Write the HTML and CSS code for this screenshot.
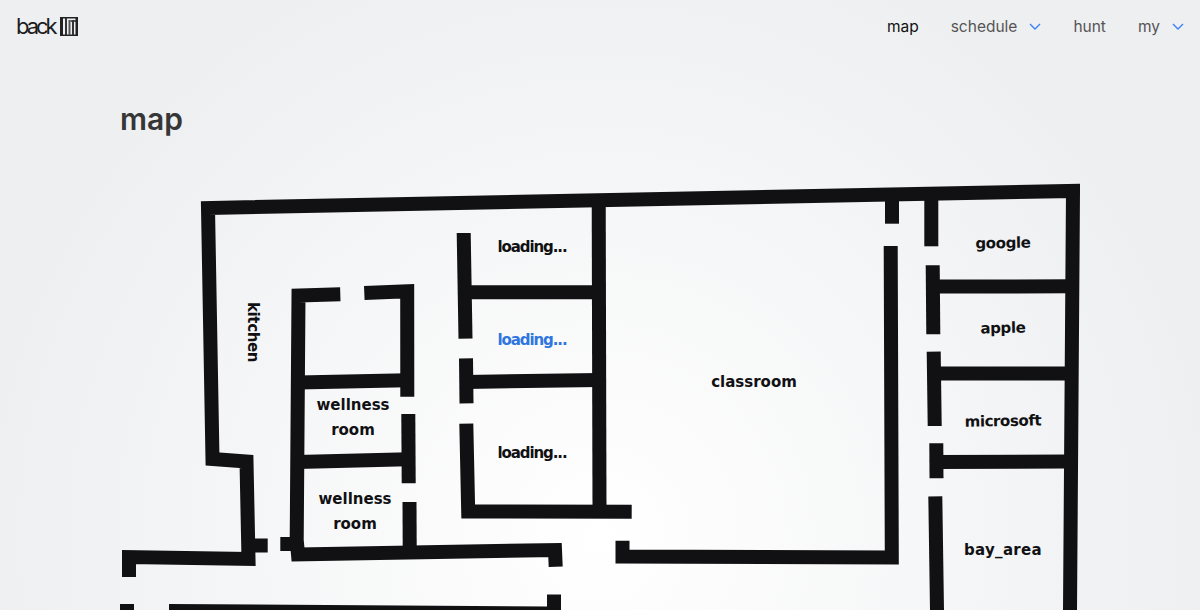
FILE: index.html
```html
<!DOCTYPE html>
<html>
<head>
<meta charset="utf-8">
<title>map</title>
<link rel="stylesheet" href="styles.css">
</head>
<body>

<header class="topbar">
  <a class="logo" href="#">
    <span class="logo-word">back</span>
    <svg class="logo-mark" width="18" height="19" viewBox="0 0 18 19">
      <rect x="0" y="0" width="18" height="1.5" fill="#222"/>
      <rect x="0" y="17.5" width="18" height="1.5" fill="#222"/>
      <rect x="0" y="0" width="3" height="19" fill="#222"/>
      <rect x="5" y="1" width="2" height="17" fill="#333"/>
      <rect x="8.5" y="3" width="2" height="15" fill="#555"/>
      <rect x="10.5" y="3" width="5.5" height="2" fill="#555"/>
      <rect x="12" y="3" width="2" height="15" fill="#333"/>
      <rect x="15.5" y="0" width="2.5" height="19" fill="#222"/>
    </svg>
  </a>
  <nav class="nav">
    <a class="nav-item active" href="#">map</a>
    <a class="nav-item" href="#">schedule
      <svg class="chevron" width="12" height="7" viewBox="0 0 12 7"><path d="M1 1l5 5 5-5"/></svg>
    </a>
    <a class="nav-item" href="#">hunt</a>
    <a class="nav-item" href="#">my
      <svg class="chevron" width="12" height="7" viewBox="0 0 12 7"><path d="M1 1l5 5 5-5"/></svg>
    </a>
  </nav>
</header>

<main class="content">
  <h1 class="title">map</h1>

  <svg class="map" width="960" height="440" viewBox="120 170 960 440">
    <g class="walls">
      <!-- outer shell -->
      <polyline points="1070,610 1073,191 208,208 212.5,459 246.5,461.5 248.5,559 129,557 129,577"/>
      <polyline points="248,545.5 267.7,545.5"/>
      <polyline points="127,604 127,610"/>
      <polyline points="169,611 547,613.5"/>
      <polyline points="554,594.5 554,610"/>

      <!-- wellness rooms -->
      <polyline points="340.3,294.3 298.5,295.5 296.7,540 298,554.5 555,550 555.7,566.7"/>
      <polyline points="280.3,544 296,544"/>
      <polyline points="364.3,293 407.2,291.2 407.3,396.7"/>
      <polyline points="298,382.5 407,380.3"/>
      <polyline points="408.3,414 408.7,483.3"/>
      <polyline points="297,462 408,459.2"/>
      <polyline points="409.5,502 409.7,548"/>

      <!-- small rooms -->
      <polyline points="463.7,233 465.5,338.7"/>
      <polyline points="465,292.3 599,292.3"/>
      <polyline points="598.7,200 599.5,510"/>
      <polyline points="466,358.3 466.5,403.3"/>
      <polyline points="466,382 599,380"/>
      <polyline points="466.3,423.7 468.2,511.5 631.7,511.8"/>

      <!-- classroom -->
      <polyline points="622.5,540.7 622.5,556.5 891.8,557.5 890.7,246"/>
      <polyline points="892,195 892,223.7"/>

      <!-- right side rooms -->
      <polyline points="931.3,195 931.3,246.3"/>
      <polyline points="932.7,265.3 933.3,334.3"/>
      <polyline points="933,286.5 1070,286.3"/>
      <polyline points="933.7,351.7 934.7,426"/>
      <polyline points="934,373.5 1068,373.5"/>
      <polyline points="936.3,443.3 936.5,478.3"/>
      <polyline points="936,462 1066,461.5"/>
      <polyline points="935.3,496.3 937,610"/>
    </g>

    <g class="labels">
      <text class="loading" x="532" y="252">loading...</text>
      <text class="loading selected" x="532" y="345">loading...</text>
      <text class="loading" x="532" y="458">loading...</text>
      <text x="754" y="387">classroom</text>
      <text class="tight" transform="translate(1003 248) rotate(-1)">google</text>
      <text class="tight" transform="translate(1003 333) rotate(-1)">apple</text>
      <text class="tight" transform="translate(1003 426) rotate(-1)">microsoft</text>
      <text class="wide" x="1003" y="555">bay_area</text>
      <text class="tight" transform="translate(248 332) rotate(90)">kitchen</text>
      <text x="353" y="410">wellness</text>
      <text x="353" y="435">room</text>
      <text x="355" y="504">wellness</text>
      <text x="355" y="529">room</text>
    </g>
  </svg>
</main>

</body>
</html>
```

FILE: styles.css
```css
html, body
{
  height: 100%;
}
body
{
  margin: 0;
  overflow: hidden;
  font-family: Inter, "Liberation Sans", sans-serif;
  background: radial-gradient(circle at 50% 88%, #ffffff 0, #eeeff1 78%);
}
a
{
  text-decoration: none;
  color: inherit;
}

.topbar
{
  display: flex;
  justify-content: space-between;
  align-items: center;
  height: 52px;
  padding: 0 16px;
}
.logo
{
  display: flex;
  align-items: center;
  gap: 5px;
  color: #1c1c1c;
}
.logo-word
{
  font-size: 22px;
  font-weight: 400;
  letter-spacing: -3px;
}
.nav
{
  display: flex;
  gap: 32px;
  font-size: 15.5px;
  color: #555;
}
.nav-item
{
  display: flex;
  align-items: center;
  gap: 12px;
}
.nav-item.active
{
  color: #111;
}
.chevron path
{
  fill: none;
  stroke: #3b82f6;
  stroke-width: 1.4;
}

.content
{
  padding: 0 120px;
}
.title
{
  margin: 0;
  height: 118px;
  padding-top: 49px;
  box-sizing: border-box;
  font-size: 30px;
  line-height: 36px;
  font-weight: 600;
  color: #363636;
}
.map
{
  display: block;
}
.walls polyline
{
  fill: none;
  stroke: #111113;
  stroke-width: 14;
  stroke-linejoin: miter;
}
.labels text
{
  font-family: "DejaVu Sans", sans-serif;
  font-weight: 700;
  font-size: 15px;
  text-anchor: middle;
  fill: #111113;
}
.labels .loading
{
  letter-spacing: -1.1px;
}
.labels .tight
{
  letter-spacing: -0.4px;
}
.labels .wide
{
  letter-spacing: 0.3px;
}
.labels .selected
{
  fill: #2f76e0;
}
```
